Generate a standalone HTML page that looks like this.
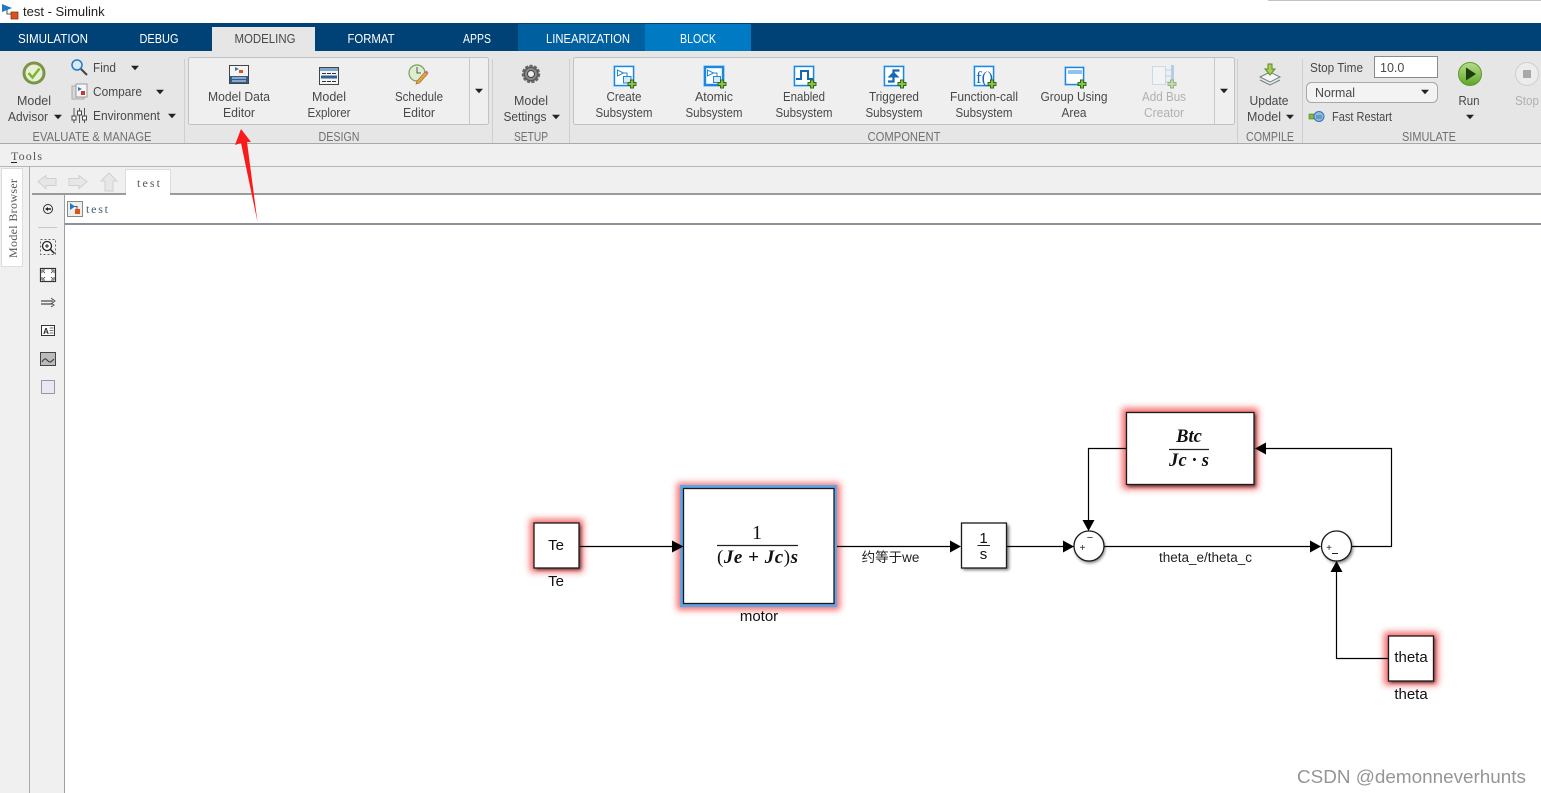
<!DOCTYPE html>
<html><head><meta charset="utf-8"><title>test - Simulink</title>
<style>
html,body{margin:0;padding:0;background:#fff;width:1541px;height:793px;overflow:hidden}
svg{display:block;position:absolute;left:0;top:0}
text{font-family:"Liberation Sans","Noto Sans CJK SC",sans-serif}
.r{font-size:12.500px;fill:#484848;text-anchor:middle}
.l{font-size:12.500px;fill:#484848}
.g{font-size:12.500px;fill:#707070;text-anchor:middle}
.t{font-size:13px;fill:#fff;text-anchor:middle}
.d{font-size:12.500px;fill:#b0b0b0;text-anchor:middle}
.s{font-family:"Liberation Serif",serif;font-size:12px;fill:#555}
.b{font-size:15px;fill:#111;text-anchor:middle}
.m{font-family:"Liberation Serif",serif;font-style:italic;font-weight:bold;fill:#111;text-anchor:middle}
</style></head><body>
<svg width="1541" height="793" viewBox="0 0 1541 793" xmlns="http://www.w3.org/2000/svg">
<defs>
<filter id="bl" x="-40%" y="-40%" width="180%" height="180%"><feGaussianBlur stdDeviation="3.500"/></filter>
<filter id="sh" x="-30%" y="-30%" width="160%" height="160%"><feGaussianBlur stdDeviation="1.500"/></filter>
<linearGradient id="gr" x1="0" y1="0" x2="0" y2="1"><stop offset="0" stop-color="#b9dc8a"/><stop offset="1" stop-color="#5ea52a"/></linearGradient>
<g id="plus"><path d="M-1.500-4h3v2.500h2.500v3h-2.500v2.500h-3v-2.500h-2.500v-3h2.500z" fill="#8cc152" stroke="#2f6b12" stroke-width="1"/></g>
<g id="arrD"><path d="M-4-2.200h8L0 2.200z" fill="#222"/></g>
</defs>

<!-- title bar -->
<rect width="1541" height="23" fill="#fff"/>
<rect x="1268" y="0" width="273" height="1" fill="#aaa" opacity=".7"/>
<path d="M2 4l10 4-10 4z" fill="#1f78c8"/>
<path d="M7 9v5h4" fill="none" stroke="#555"/>
<rect x="11" y="12" width="7" height="7" fill="#d9531e" stroke="#7a2a0a" stroke-width=".7"/>
<text x="23" y="16" font-size="13" fill="#222">test - Simulink</text>

<!-- tabs -->
<rect y="23" width="1541" height="28" fill="#004275"/>
<rect x="518" y="24" width="127" height="27" fill="#00609f"/>
<rect x="645" y="24" width="106" height="27" fill="#007ac3"/>
<rect x="212" y="27" width="103" height="24" fill="#e6e6e6"/>
<text class="t" x="53" y="43" textLength="70" lengthAdjust="spacingAndGlyphs">SIMULATION</text>
<text class="t" x="159" y="43" textLength="39" lengthAdjust="spacingAndGlyphs">DEBUG</text>
<text class="r" x="265" y="43" textLength="61" lengthAdjust="spacingAndGlyphs" style="font-size:13px">MODELING</text>
<text class="t" x="371" y="43" textLength="47" lengthAdjust="spacingAndGlyphs">FORMAT</text>
<text class="t" x="477" y="43" textLength="28" lengthAdjust="spacingAndGlyphs">APPS</text>
<text class="t" x="588" y="43" textLength="84" lengthAdjust="spacingAndGlyphs">LINEARIZATION</text>
<text class="t" x="698" y="43" textLength="36" lengthAdjust="spacingAndGlyphs">BLOCK</text>

<!-- ribbon -->
<rect y="51" width="1541" height="92" fill="#e6e6e6"/>
<rect y="143" width="1541" height="1" fill="#a9a9a9"/>
<path d="M184.500 59V143M492.500 59V143M569.500 59V143M1237.500 59V143M1302.500 59V143" stroke="#cfcfcf"/>
<rect x="188.500" y="57.500" width="300" height="67" rx="2" fill="#efefef" stroke="#c2c2c2"/>
<path d="M469.500 58V124" stroke="#c9c9c9"/>
<rect x="573.500" y="57.500" width="661" height="67" rx="2" fill="#efefef" stroke="#c2c2c2"/>
<path d="M1214.500 58V124" stroke="#c9c9c9"/>

<!-- group labels -->
<text class="g" x="92" y="141" textLength="119" lengthAdjust="spacingAndGlyphs">EVALUATE &amp; MANAGE</text>
<text class="g" x="339" y="141" textLength="41" lengthAdjust="spacingAndGlyphs">DESIGN</text>
<text class="g" x="531" y="141" textLength="34" lengthAdjust="spacingAndGlyphs">SETUP</text>
<text class="g" x="904" y="141" textLength="73" lengthAdjust="spacingAndGlyphs">COMPONENT</text>
<text class="g" x="1270" y="141" textLength="48" lengthAdjust="spacingAndGlyphs">COMPILE</text>
<text class="g" x="1429" y="141" textLength="54" lengthAdjust="spacingAndGlyphs">SIMULATE</text>

<!-- evaluate -->
<circle cx="34" cy="73" r="10" fill="#e9efd6" stroke="#7a9448" stroke-width="3"/>
<path d="M28.500 73l4 4.500 7-9" fill="none" stroke="#79b82e" stroke-width="2.500"/>
<text class="r" x="34" y="105" textLength="34" lengthAdjust="spacingAndGlyphs">Model</text>
<text class="r" x="28" y="121" textLength="40" lengthAdjust="spacingAndGlyphs">Advisor</text><use href="#arrD" x="58" y="117"/>
<circle cx="77" cy="65" r="5" fill="#d7ecfa" stroke="#2a7ac0" stroke-width="1.500"/>
<path d="M81 69l6 6" stroke="#444" stroke-width="2"/>
<text class="l" x="93" y="72" textLength="23" lengthAdjust="spacingAndGlyphs">Find</text><use href="#arrD" x="135" y="68"/>
<rect x="72" y="86" width="12" height="13" fill="#d8d8d8" stroke="#aaa"/>
<rect x="76" y="84" width="11" height="13" fill="#f7f7f7" stroke="#999"/>
<path d="M78 87l4 2-4 2z" fill="#2a7ac0"/><rect x="81" y="91" width="4" height="4" fill="#c33"/>
<text class="l" x="93" y="96" textLength="49" lengthAdjust="spacingAndGlyphs">Compare</text><use href="#arrD" x="160" y="92"/>
<path d="M74 108v15M79.500 108v15M84.500 108v15" stroke="#555"/>
<rect x="72" y="116" width="4" height="4" fill="#fff" stroke="#444"/><rect x="77.500" y="111" width="4" height="4" fill="#fff" stroke="#444"/><rect x="82.500" y="116" width="4" height="4" fill="#fff" stroke="#444"/>
<text class="l" x="93" y="120" textLength="67" lengthAdjust="spacingAndGlyphs">Environment</text><use href="#arrD" x="172" y="116"/>

<!-- design -->
<rect x="229.500" y="65.500" width="19" height="18" fill="#f4f4f4" stroke="#444"/>
<path d="M235 67l4 2-4 2z" fill="#2a7ac0"/><rect x="239" y="70" width="4" height="3" fill="#d9531e"/>
<rect x="230" y="76" width="18" height="7" fill="#2f5f92"/><path d="M232 78h14M232 81h14" stroke="#e8eef5"/>
<text class="r" x="239" y="101" textLength="62" lengthAdjust="spacingAndGlyphs">Model Data</text>
<text class="r" x="239" y="117" textLength="32" lengthAdjust="spacingAndGlyphs">Editor</text>
<rect x="319.500" y="67.500" width="19" height="17" fill="#f4f4f4" stroke="#444"/>
<rect x="320" y="68" width="18" height="3" fill="#7da6cc"/>
<path d="M322 73.500h14" stroke="#333" stroke-dasharray="4 1"/><rect x="321" y="75.500" width="16" height="3" fill="#2f5f92"/><path d="M322 81.500h14" stroke="#333" stroke-dasharray="4 1"/>
<text class="r" x="329" y="101" textLength="34" lengthAdjust="spacingAndGlyphs">Model</text>
<text class="r" x="329" y="117" textLength="43" lengthAdjust="spacingAndGlyphs">Explorer</text>
<circle cx="417" cy="73" r="8" fill="#dfeed0" stroke="#7a9e5c" stroke-width="1.200"/>
<path d="M417 67v6h4" fill="none" stroke="#555"/>
<path d="M416 84l1-3 8-9 2.500 2-8 9z" fill="#e8a33c" stroke="#8a6a2c" stroke-width=".6"/><path d="M425 72l2.500 2 1-1.500-2-2z" fill="#e8609a"/>
<text class="r" x="419" y="101" textLength="48" lengthAdjust="spacingAndGlyphs">Schedule</text>
<text class="r" x="419" y="117" textLength="32" lengthAdjust="spacingAndGlyphs">Editor</text>
<use href="#arrD" x="479" y="91"/>

<!-- setup -->
<circle cx="531" cy="74" r="8" fill="#888" stroke="#666" stroke-width="2.500" stroke-dasharray="3 1.500"/>
<circle cx="531" cy="74" r="6.500" fill="#8a8a8a" stroke="#555"/>
<circle cx="531" cy="74" r="3.500" fill="#eee" stroke="#444"/>
<text class="r" x="531" y="105" textLength="34" lengthAdjust="spacingAndGlyphs">Model</text>
<text class="r" x="525" y="121" textLength="43" lengthAdjust="spacingAndGlyphs">Settings</text><use href="#arrD" x="556" y="117"/>

<!-- component icons -->
<g fill="none">
<rect x="613.500" y="65.500" width="21" height="21" stroke="#bfe0fa"/>
<rect x="614.500" y="66.500" width="19" height="19" fill="#fff" stroke="#1c87dc" stroke-width="1.400"/>
<path d="M617.500 70v6l6-3zM623.500 73h3.500v3" stroke="#1c87dc"/><rect x="623.500" y="76.500" width="7.500" height="6.500" fill="#dfe9f5" stroke="#1c87dc"/>
<use href="#plus" x="632" y="84"/>

<rect x="703.500" y="65.500" width="21" height="21" stroke="#bfe0fa"/>
<rect x="705" y="67" width="18" height="18" fill="#fff" stroke="#1c87dc" stroke-width="2.400"/>
<path d="M707.500 70v6l6-3zM713.500 73h3.500v3" stroke="#1c87dc"/><rect x="713.500" y="76.500" width="7" height="6" fill="#dfe9f5" stroke="#1c87dc"/>
<use href="#plus" x="722" y="84"/>

<rect x="793.500" y="65.500" width="21" height="21" stroke="#bfe0fa"/>
<rect x="794.500" y="66.500" width="19" height="19" fill="#fff" stroke="#1c87dc" stroke-width="1.400"/>
<path d="M796 79h5v-8h7v8h5" stroke="#1568b5" stroke-width="2"/>
<use href="#plus" x="812" y="84"/>

<rect x="883.500" y="65.500" width="21" height="21" stroke="#bfe0fa"/>
<rect x="884.500" y="66.500" width="19" height="19" fill="#fff" stroke="#1c87dc" stroke-width="1.400"/>
<path d="M888 81.500h5.500V70.500h6" stroke="#1568b5" stroke-width="2.200"/>
<path d="M887.500 77.500l6-6 6 6z" fill="#1568b5"/>
<use href="#plus" x="902" y="84"/>

<rect x="973.500" y="65.500" width="21" height="21" stroke="#bfe0fa"/>
<rect x="974.500" y="66.500" width="19" height="19" fill="#fff" stroke="#1c87dc" stroke-width="1.400"/>

<rect x="1064.500" y="66.500" width="20" height="19" stroke="#bfe0fa"/>
<rect x="1065.500" y="67.500" width="18" height="17" fill="#fff" stroke="#1c87dc" stroke-width="1.400"/>
<rect x="1068" y="70" width="14" height="4" fill="#8fc3f0"/>
<use href="#plus" x="1082" y="84"/>

<g opacity=".45">
<rect x="1152.500" y="66.500" width="13" height="18" fill="#f8f8f8" stroke="#9cc4e8"/>
<path d="M1165 70h6M1165 76h6M1165 82h6" stroke="#7eb1dc"/><rect x="1171" y="65" width="3" height="22" fill="#6aa6da"/>
<use href="#plus" x="1172" y="84"/>
</g>
</g>
<text x="976" y="83" font-size="17" fill="#1568b5" textLength="17" lengthAdjust="spacingAndGlyphs" style="font-family:'Liberation Serif',serif">f()</text>
<use href="#plus" x="992" y="84"/>

<text class="r" x="624" y="101" textLength="35" lengthAdjust="spacingAndGlyphs">Create</text><text class="r" x="624" y="117" textLength="57" lengthAdjust="spacingAndGlyphs">Subsystem</text>
<text class="r" x="714" y="101" textLength="38" lengthAdjust="spacingAndGlyphs">Atomic</text><text class="r" x="714" y="117" textLength="57" lengthAdjust="spacingAndGlyphs">Subsystem</text>
<text class="r" x="804" y="101" textLength="42" lengthAdjust="spacingAndGlyphs">Enabled</text><text class="r" x="804" y="117" textLength="57" lengthAdjust="spacingAndGlyphs">Subsystem</text>
<text class="r" x="894" y="101" textLength="50" lengthAdjust="spacingAndGlyphs">Triggered</text><text class="r" x="894" y="117" textLength="57" lengthAdjust="spacingAndGlyphs">Subsystem</text>
<text class="r" x="984" y="101" textLength="68" lengthAdjust="spacingAndGlyphs">Function-call</text><text class="r" x="984" y="117" textLength="57" lengthAdjust="spacingAndGlyphs">Subsystem</text>
<text class="r" x="1074" y="101" textLength="67" lengthAdjust="spacingAndGlyphs">Group Using</text><text class="r" x="1074" y="117" textLength="25" lengthAdjust="spacingAndGlyphs">Area</text>
<text class="d" x="1164" y="101" textLength="44" lengthAdjust="spacingAndGlyphs">Add Bus</text><text class="d" x="1164" y="117" textLength="40" lengthAdjust="spacingAndGlyphs">Creator</text>
<use href="#arrD" x="1224" y="91"/>

<!-- compile -->
<path d="M1260 77l10-5 10 5-10 5z" fill="#f5f5f5" stroke="#6b8080"/>
<path d="M1260 80l10 5 10-5" fill="none" stroke="#6b8080"/>
<path d="M1268 64h4v5h3l-5 6-5-6h3z" fill="#a5cf5a" stroke="#5d8a1f"/>
<text class="r" x="1269" y="105" textLength="39" lengthAdjust="spacingAndGlyphs">Update</text>
<text class="r" x="1264" y="121" textLength="34" lengthAdjust="spacingAndGlyphs">Model</text><use href="#arrD" x="1290" y="117"/>

<!-- simulate -->
<text class="l" x="1310" y="72" textLength="53" lengthAdjust="spacingAndGlyphs">Stop Time</text>
<rect x="1374.500" y="56.500" width="63" height="21" fill="#fff" stroke="#8a8a8a"/>
<text class="l" x="1380" y="72">10.0</text>
<rect x="1306.500" y="82.500" width="131" height="20" rx="5" fill="#f3f3f3" stroke="#a8a8a8"/>
<text class="l" x="1315" y="97" textLength="40" lengthAdjust="spacingAndGlyphs">Normal</text><use href="#arrD" x="1425" y="92"/>
<rect x="1309" y="114" width="5" height="5" fill="#7dba3c" stroke="#4d7d1e" stroke-width=".6"/>
<circle cx="1319" cy="116.500" r="5" fill="#8dbde6" stroke="#3a74ab"/>
<path d="M1316 116h6M1316 118h6" stroke="#2d5f8f" stroke-width=".8"/>
<text class="l" x="1332" y="121" textLength="60" lengthAdjust="spacingAndGlyphs">Fast Restart</text>
<circle cx="1470" cy="74" r="11.500" fill="url(#gr)" stroke="#5d9a28"/>
<path d="M1466 67.500l10 6.500-10 6.500z" fill="#1d3d10"/>
<text class="r" x="1469" y="105" textLength="21" lengthAdjust="spacingAndGlyphs">Run</text><use href="#arrD" x="1470" y="117"/>
<circle cx="1527" cy="74" r="11.500" fill="#ececec" stroke="#cfcfcf"/>
<rect x="1523" y="70" width="8" height="8" fill="#a8a8a8"/>
<text class="d" x="1527" y="105" textLength="24" lengthAdjust="spacingAndGlyphs">Stop</text>

<!-- tools bar -->
<rect y="144" width="1541" height="22" fill="#f0f0f0"/>
<rect y="166" width="1541" height="1" fill="#b5b5b5"/>
<text class="s" x="11" y="160" textLength="31">Tools</text>
<path d="M11 162.500h6" stroke="#222"/>

<!-- workspace -->
<rect y="167" width="1541" height="626" fill="#f0f0f0"/>
<rect x="29" y="167" width="1" height="626" fill="#a8a8a8"/>
<rect x="1.500" y="168.500" width="21" height="98" fill="#fff" stroke="#ddd"/>
<text class="s" transform="translate(17 258) rotate(-90)" textLength="79">Model Browser</text>

<path d="M38 181.500l8-6v3h10v7H46v3z" fill="#e7e7e7" stroke="#d0d0d0"/>
<path d="M87 181.500l-8-6v3H69v7h10v3z" fill="#e7e7e7" stroke="#d0d0d0"/>
<path d="M109 173l8 8h-4v10h-8v-10h-4z" fill="#e7e7e7" stroke="#d0d0d0"/>
<rect x="125.500" y="169.500" width="45" height="25" fill="#fff" stroke="#ddd"/>
<text class="s" x="137" y="187" textLength="23">test</text>
<rect x="32" y="193" width="1509" height="2" fill="#9a9a9a"/>
<rect x="126" y="192" width="44" height="3" fill="#fff"/>

<!-- left tools -->
<rect x="64" y="195" width="1" height="598" fill="#9aa0a8"/>
<rect x="65" y="195" width="1476" height="598" fill="#fff"/>
<circle cx="48" cy="209" r="4.500" fill="#f2f2f2" stroke="#333"/><path d="M45 209l3-2v1.200h3v1.600h-3v1.200z" fill="#222"/>
<path d="M38 227.500h19" stroke="#c8c8c8"/>
<rect x="40.500" y="239.500" width="15" height="15" fill="none" stroke="#666" stroke-dasharray="2 2"/>
<circle cx="47" cy="246" r="4.500" fill="#fff" stroke="#222" stroke-width="1.300"/><path d="M45 246h4M47 244v4" stroke="#222"/><path d="M50.500 249.500l4 4" stroke="#222" stroke-width="1.500"/>
<rect x="40.500" y="268.500" width="15" height="13" fill="#fff" stroke="#333" stroke-width="1.200"/>
<path d="M42 270h3M42 270v3M54 270h-3M54 270v3M42 280h3M42 280v-3M54 280h-3M54 280v-3M43 271l2 2M53 271l-2 2M43 279l2-2M53 279l-2-2" stroke="#333" stroke-width=".8" fill="none"/>
<path d="M41 301h12M41 304h12" stroke="#222"/><path d="M51 298l4 3-4 3" fill="none" stroke="#555"/><path d="M51 303l3 2-3 2" fill="none" stroke="#555"/>
<rect x="41.500" y="325.500" width="13" height="10" fill="#fff" stroke="#333"/>
<text x="46" y="334" font-size="8" font-weight="bold" fill="#222" text-anchor="middle">A</text><path d="M49.500 328h4M49.500 330.500h4M49.500 333h4" stroke="#444" stroke-width=".7"/>
<rect x="40.500" y="352.500" width="15" height="13" fill="#bbb" stroke="#444"/>
<path d="M42 362c3-5 4-3 6-1s3 1 6-2" fill="none" stroke="#333"/>
<rect x="41.500" y="380.500" width="13" height="13" fill="#e6e8f6" stroke="#999"/>

<!-- breadcrumb -->
<rect x="65" y="195" width="1476" height="27" fill="#fff"/>
<rect x="67.500" y="201.500" width="15" height="15" fill="#eee" stroke="#888"/>
<path d="M70 203l5 3.500-5 3.500z" fill="#1f78c8"/><path d="M74 206.500h3v3" fill="none" stroke="#555"/><rect x="75" y="209" width="5" height="5" fill="#d9531e"/>
<text class="s" x="86" y="213" textLength="22" style="fill:#3f5f6f">test</text>
<rect x="65" y="223" width="1476" height="2" fill="#8b929c"/>

<!-- red arrow -->
<polygon points="241,129 251,142 247,142 257.500,222 241,143 235,145" fill="#fb1a1a"/>

<!-- glows -->
<g fill="#f02a2a" opacity=".7" filter="url(#bl)">
<rect x="530" y="519" width="53" height="53"/>
<rect x="677" y="483" width="163" height="127"/>
<rect x="1122" y="408" width="136" height="81"/>
<rect x="1384" y="632" width="54" height="53"/>
</g>
<g fill="#000" opacity=".55" filter="url(#sh)">
<rect x="536" y="525" width="45" height="45"/>
<rect x="1128" y="414" width="128" height="73"/>
<rect x="1390" y="638" width="45" height="45"/>
<rect x="963" y="525" width="46" height="45"/>
<circle cx="1090" cy="548" r="15"/>
<circle cx="1338" cy="548" r="15"/>
</g>

<!-- lines -->
<g fill="none" stroke="#000" stroke-width="1.200">
<path d="M580 546.500H674M835 546.500H952M1007 546.500H1065M1104 546.500H1312M1352 546.500H1391.500V448.500H1264M1126 448.500H1088.500V522M1388 658.500H1336.500V570"/>
</g>

<!-- blocks -->
<g fill="#fff" stroke="#1a1a1a" stroke-width="1.300">
<rect x="534" y="523" width="45" height="45"/>
<rect x="681.500" y="486.500" width="154" height="119" stroke="#5ea4e6" stroke-width="3"/>
<rect x="683.500" y="488.500" width="150.500" height="115"/>
<rect x="961.500" y="523" width="45" height="45"/>
<rect x="1126.500" y="412.500" width="127.500" height="72"/>
<rect x="1388.500" y="636" width="45" height="45"/>
<circle cx="1089" cy="546" r="15"/>
<circle cx="1336.500" cy="546" r="15"/>
</g>
<g fill="#000">
<path d="M672 540.500l11.500 6-11.500 6z"/><path d="M950 540.500l11 6-11 6z"/><path d="M1063 540.500l11 6-11 6z"/><path d="M1310 540.500l11 6-11 6z"/>
<path d="M1266 442.500l-11 6 11 6z"/><path d="M1082.500 520l6 11 6-11z"/><path d="M1330.500 572l6-11 6 11z"/>
</g>

<text class="b" x="556" y="550">Te</text>
<text class="b" x="556" y="586">Te</text>
<text x="757" y="539" font-size="20" fill="#111" text-anchor="middle" style="font-family:'Liberation Serif',serif">1</text>
<path d="M717 545.500H798" stroke="#222" stroke-width="1.200"/>
<text x="717" y="563" font-size="19" fill="#111" textLength="81" style="font-family:'Liberation Serif',serif"><tspan>(</tspan><tspan font-style="italic" font-weight="bold">Je</tspan><tspan font-weight="bold"> + </tspan><tspan font-style="italic" font-weight="bold">Jc</tspan><tspan>)</tspan><tspan font-style="italic" font-weight="bold">s</tspan></text>
<text class="b" x="759" y="621">motor</text>
<text x="890.500" y="562" font-size="13.500" fill="#222" text-anchor="middle">约等于we</text>
<text class="b" x="983.500" y="543">1</text>
<path d="M977.500 545.500H990" stroke="#222"/>
<text class="b" x="983.500" y="559">s</text>
<text x="1082.500" y="551" font-size="10" fill="#222" text-anchor="middle">+</text>
<text x="1090" y="541" font-size="11" fill="#222" text-anchor="middle">−</text>
<text x="1329" y="551" font-size="10" fill="#222" text-anchor="middle">+</text>
<path d="M1332 553.500h6" stroke="#222"/>
<text x="1205.500" y="562" font-size="13.500" fill="#222" text-anchor="middle">theta_e/theta_c</text>
<text class="m" x="1189" y="442" font-size="18.500">Btc</text>
<path d="M1169 449.500H1209" stroke="#222" stroke-width="1.200"/>
<text class="m" x="1189" y="466" font-size="18.500" textLength="40">Jc · s</text>
<text class="b" x="1411" y="662">theta</text>
<text class="b" x="1411" y="699">theta</text>

<!-- watermark -->
<text x="1297" y="783" font-size="18.500" fill="#8a8a8a" opacity=".9" textLength="229" lengthAdjust="spacingAndGlyphs">CSDN @demonneverhunts</text>
</svg>
</body></html>
